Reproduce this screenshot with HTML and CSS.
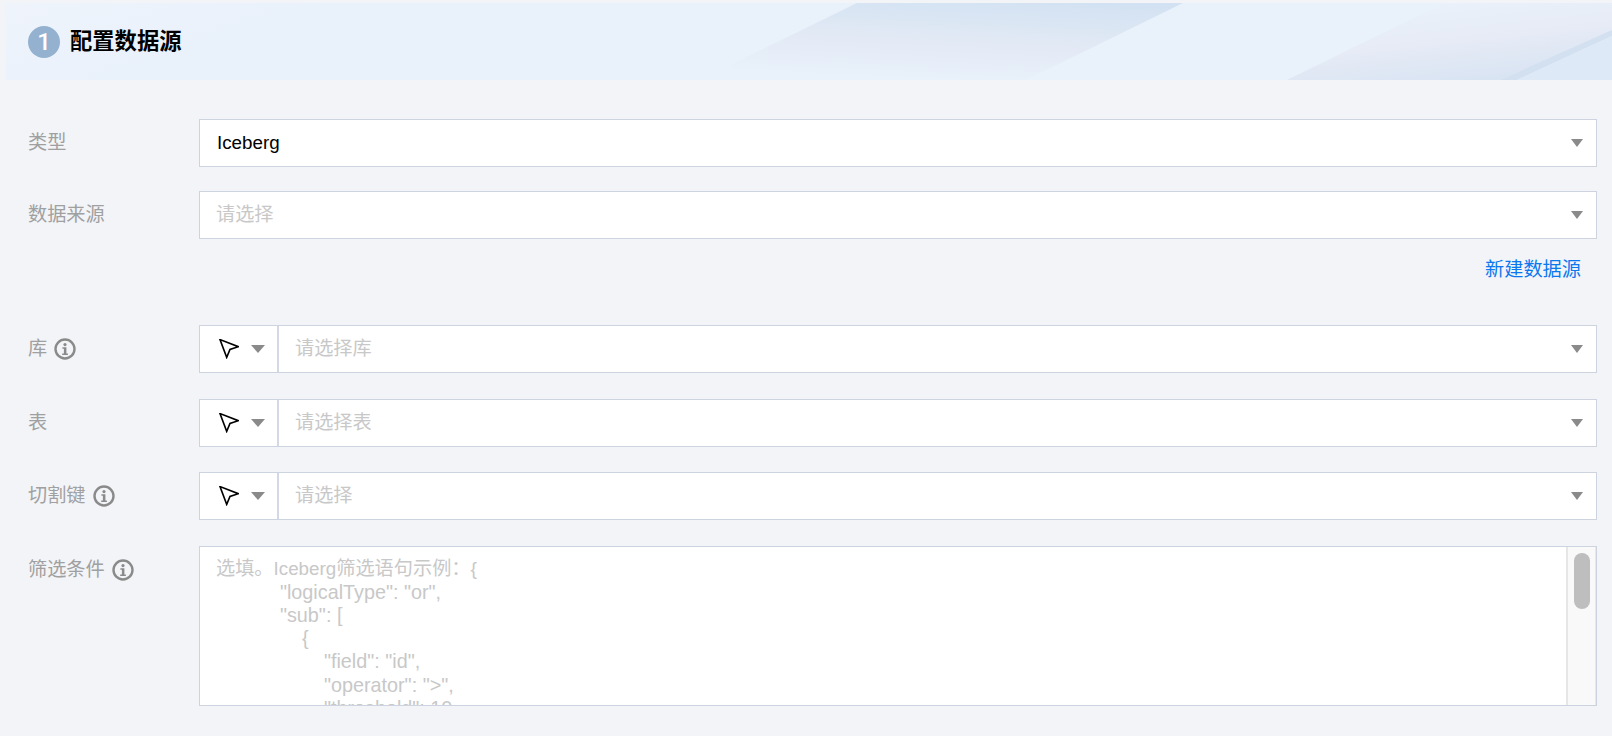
FILE: index.html
```html
<!DOCTYPE html>
<html lang="en">
<head>
  <meta charset="UTF-8">
  <title>配置数据源</title>
  <link rel="stylesheet" href="styles.css">
</head>
<body>
  <svg class="defs" width="0" height="0">
    <symbol id="icon-info" viewBox="0 0 22 22">
      <circle cx="11" cy="11" r="9.5" fill="none" stroke="#8a8a8a" stroke-width="2.4"/>
      <circle cx="11" cy="6.6" r="1.6" fill="#8a8a8a"/>
      <path d="M8.4 9.3h4v6.1h1.5v1.5H8.2v-1.5h1.7v-4.6H8.4z" fill="#8a8a8a"/>
    </symbol>
    <symbol id="icon-pointer" viewBox="0 0 20 20">
      <path d="M1 .6 L19.3 7.7 L11 10.4 L7.7 18.4 Z" fill="#fff" stroke="#000" stroke-width="1.6" stroke-linejoin="miter"/>
    </symbol>
  </svg>

  <header class="section-head">
    <svg class="head-art" viewBox="0 0 1606 77" preserveAspectRatio="none">
      <defs>
        <linearGradient id="band-one" x1="0.75" y1="0" x2="0.45" y2="1">
          <stop offset="0" stop-color="#d3e2f2"/>
          <stop offset="0.55" stop-color="#e3eaf5"/>
          <stop offset="1" stop-color="#e9f1fb"/>
        </linearGradient>
        <linearGradient id="band-two" x1="0.3" y1="0" x2="0.75" y2="1">
          <stop offset="0" stop-color="#ebf2fb"/>
          <stop offset="0.5" stop-color="#e6ebf6"/>
          <stop offset="1" stop-color="#d7e3f2"/>
        </linearGradient>
      </defs>
      <polygon points="851,0 1177,0 1020,77 694,77" fill="url(#band-one)"/>
      <polygon points="1438,0 1606,0 1606,29 1494,77 1281,77" fill="url(#band-two)"/>
      <polygon points="1606,27 1606,33 1511,77 1494,77" fill="#d3e0f0"/>
      <polygon points="1606,33 1606,77 1511,77" fill="#dde9f7"/>
    </svg>
    <span class="step-badge">1</span>
    <h1 class="section-title">配置数据源</h1>
  </header>

  <main class="form">
    <div class="form-row">
      <label class="form-label"><span class="label-text">类型</span></label>
      <div class="select">
        <span class="select-value latin">Iceberg</span>
        <span class="caret"></span>
      </div>
    </div>

    <div class="form-row form-row-tight">
      <label class="form-label"><span class="label-text">数据来源</span></label>
      <div class="select">
        <span class="select-value placeholder">请选择</span>
        <span class="caret"></span>
      </div>
    </div>

    <div class="link-row"><a class="link" href="#">新建数据源</a></div>

    <div class="form-row">
      <label class="form-label"><span class="label-text">库</span><svg class="info"><use href="#icon-info"/></svg></label>
      <div class="select">
        <span class="mode"><svg class="pointer"><use href="#icon-pointer"/></svg><span class="caret"></span></span>
        <span class="select-value placeholder">请选择库</span>
        <span class="caret"></span>
      </div>
    </div>

    <div class="form-row">
      <label class="form-label"><span class="label-text">表</span></label>
      <div class="select">
        <span class="mode"><svg class="pointer"><use href="#icon-pointer"/></svg><span class="caret"></span></span>
        <span class="select-value placeholder">请选择表</span>
        <span class="caret"></span>
      </div>
    </div>

    <div class="form-row">
      <label class="form-label"><span class="label-text">切割键</span><svg class="info"><use href="#icon-info"/></svg></label>
      <div class="select">
        <span class="mode"><svg class="pointer"><use href="#icon-pointer"/></svg><span class="caret"></span></span>
        <span class="select-value placeholder">请选择</span>
        <span class="caret"></span>
      </div>
    </div>

    <div class="form-row">
      <label class="form-label"><span class="label-text">筛选条件</span><svg class="info"><use href="#icon-info"/></svg></label>
      <div class="textarea">
        <div class="textarea-text">
          <div class="textarea-first">选填。<span class="latin">Iceberg</span>筛选语句示例：{</div>
          <pre class="textarea-json">            "logicalType": "or",
            "sub": [
                {
                    "field": "id",
                    "operator": "&gt;",
                    "threshold": 10
                }
            ]
        }</pre>
        </div>
        <div class="scrollbar"><div class="scroll-thumb"></div></div>
      </div>
    </div>
  </main>
</body>
</html>
```

FILE: styles.css
```css
* {
  box-sizing: border-box;
}

html, body {
  height: 736px;
  overflow: hidden;
}

body {
  margin: 0;
  padding-top: 3px;
  background: #f2f4f8;
  font-family: "Liberation Sans", "Noto Sans CJK SC", sans-serif;
  font-size: 19.2px;
}

.defs {
  position: absolute;
}

.latin {
  font-size: 18.8px;
}

.section-head {
  position: relative;
  display: flex;
  align-items: center;
  height: 77px;
  margin-left: 6px;
  padding-left: 22px;
  background: linear-gradient(160deg, #eff4fb 0, #e9f1fb 110px);
}

.head-art {
  position: absolute;
  left: 0;
  top: 0;
  width: 100%;
  height: 100%;
}

.step-badge {
  position: relative;
  width: 32px;
  height: 32px;
  border-radius: 50%;
  background: #94b2cf;
  color: #fff;
  font-family: Roboto, sans-serif;
  font-size: 24px;
  font-weight: 500;
  line-height: 32px;
  text-align: center;
}

.section-title {
  position: relative;
  margin: 0 0 0 10px;
  padding-bottom: 5px;
  font-size: 22.3px;
  font-weight: bold;
  color: #000;
}

.form {
  padding: 39px 15px 0 29px;
}

.form-row {
  display: flex;
  margin-bottom: 25.5px;
}

.form-row-tight {
  margin-bottom: 0;
}

.form-row:first-child {
  margin-bottom: 24px;
}

.form-label {
  display: flex;
  align-items: center;
  flex: 0 0 170px;
  height: 48px;
  color: #a0a0a0;
}

.label-text {
  margin-left: -1px;
  padding-bottom: 4px;
}

.info {
  width: 22px;
  height: 22px;
  margin-left: 7px;
}

.select {
  display: flex;
  align-items: center;
  flex: 1;
  height: 48px;
  border: 1px solid #cdd4e0;
  background: #fff;
}

.select-value {
  flex: 1;
  padding-left: 17px;
  color: #000;
}

.placeholder {
  padding-left: 16px;
  padding-bottom: 4px;
  color: #c8c8c8;
}

.mode {
  display: flex;
  align-items: center;
  flex: 0 0 79px;
  height: 100%;
  padding-left: 19px;
  border-right: 2px solid #d2d9e5;
}

.mode .caret {
  margin: 0 0 0 12px;
  border-top-width: 8px;
  border-left-width: 7px;
  border-right-width: 7px;
}

.pointer {
  width: 20px;
  height: 20px;
}

.caret {
  width: 0;
  height: 0;
  margin-right: 13px;
  border-style: solid;
  border-width: 8px 6.5px 0;
  border-color: #8a8a8a transparent transparent;
}

.link-row {
  height: 86px;
  padding-top: 19px;
  padding-right: 16px;
  text-align: right;
  line-height: 24px;
}

.link {
  color: #0a78ef;
  text-decoration: none;
}

.textarea {
  position: relative;
  flex: 1;
  height: 160px;
  border: 1px solid #cdd4e0;
  background: #fff;
  overflow: hidden;
}

.textarea-text {
  padding: 10px 17px;
  line-height: 23.33px;
  color: #c8c8c8;
}

.textarea-first {
  height: 24px;
  margin-left: -1px;
}

.textarea-json {
  margin: 0 0 0 -3px;
  font: inherit;
  font-size: 19.8px;
  line-height: 23.33px;
}

.scrollbar {
  position: absolute;
  top: 0;
  right: 0;
  bottom: 0;
  width: 30px;
  padding: 6px 6px 0;
  background: #f9f9f9;
  border-left: 2px solid #e6e6e6;
  border-right: 1px solid #e8e8e8;
}

.scroll-thumb {
  width: 16px;
  height: 56px;
  border-radius: 8px;
  background: #bebebe;
}
```
